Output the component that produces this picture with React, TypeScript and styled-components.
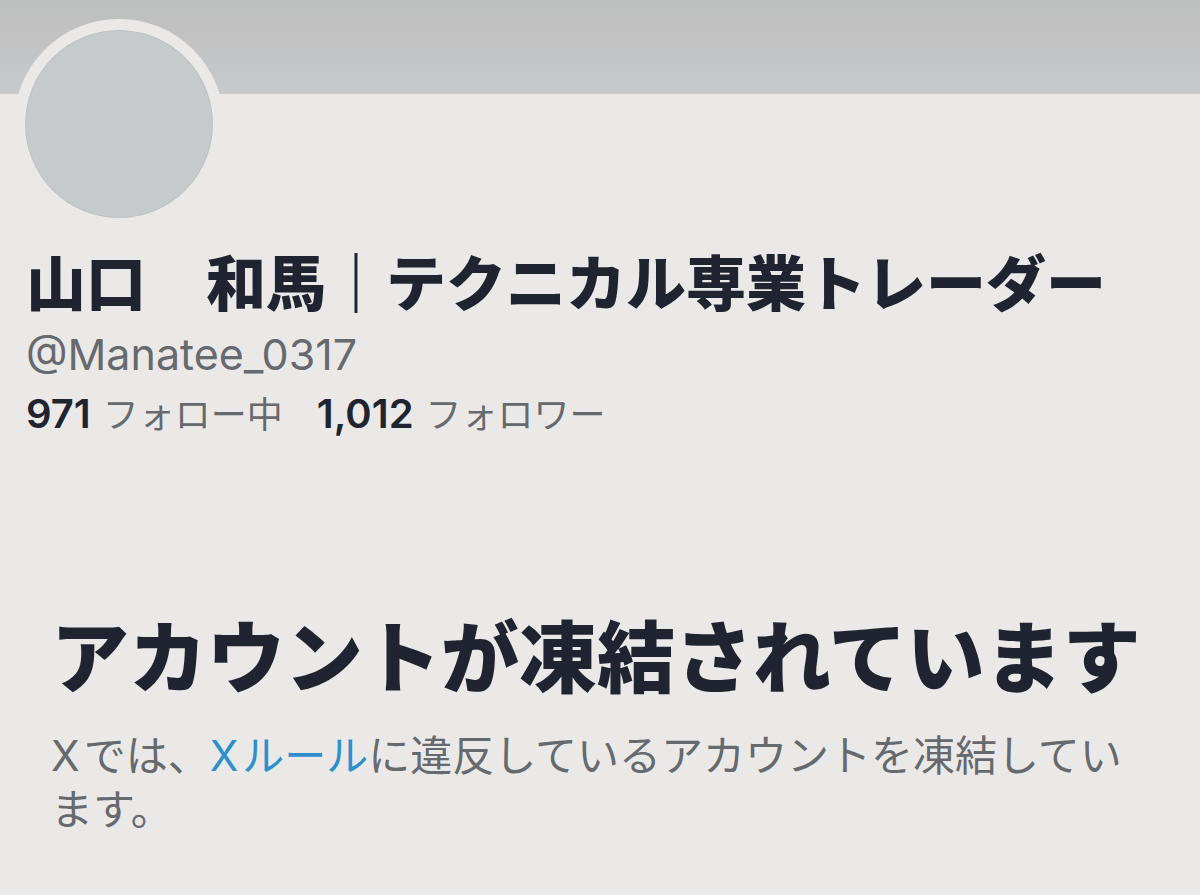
import React from "react";
import styled, { createGlobalStyle } from "styled-components";

const GlobalStyle = createGlobalStyle`
  *, *::before, *::after { box-sizing: border-box; }
  html { background: #ebe9e8; }
  body {
    margin: 0;
    background: #ebe9e8;
    color: #1f2430;
    font-family: Inter, "Noto Sans CJK JP", sans-serif;
  }
`;

const Page = styled.main`
  width: 100%;
  overflow: hidden;
`;

const Banner = styled.div`
  height: 94px;
  background: linear-gradient(#bdbfbe, #c2c2c2 40%, #c3c4c6 55%, #c7c9ca);
`;

const Profile = styled.header`
  padding: 0 26px;
`;

const Avatar = styled.div`
  position: relative;
  width: 210px;
  height: 210px;
  margin: -75px 0 0 -12px;
  border: 11px solid #ebe9e8;
  border-radius: 50%;
  background: #c6cacb;
  box-shadow: inset 0 0 0 1px #bcc0c1;
`;

const Name = styled.h1`
  margin: 17px 0 0;
  font-size: 60px;
  line-height: 76px;
  font-weight: 900;
  white-space: nowrap;
`;

const Handle = styled.p`
  margin: 2px 0 0;
  color: #66696d;
  font-size: 43px;
  line-height: 60px;
`;

const Stats = styled.div`
  display: flex;
  gap: 34px;
  font-size: 36px;
  line-height: 60px;
`;

const Stat = styled.a`
  display: flex;
  align-items: baseline;
  gap: 12px;
  color: #66696d;
  text-decoration: none;
  white-space: nowrap;
`;

const Count = styled.strong`
  color: #1f2430;
  font-size: 40px;
  font-weight: 600;
`;

const Notice = styled.section`
  padding: 164px 51px 56px;
`;

const Title = styled.h2`
  margin: 0;
  font-size: 78px;
  line-height: 100px;
  font-weight: 900;
  white-space: nowrap;
`;

const Message = styled.p`
  margin: 20px 0 0;
  color: #66696d;
  font-size: 42px;
  line-height: 54px;
`;

const Brand = styled.span`
  margin-right: 4px;
`;

const RulesLink = styled.a`
  color: #2e8fcd;
  text-decoration: none;
`;

export default function App() {
  return (
    <Page lang="ja">
      <GlobalStyle />
      <Banner />
      <Profile>
        <Avatar />
        <Name>山口　和馬｜テクニカル専業トレーダー</Name>
        <Handle>@Manatee_0317</Handle>
        <Stats>
          <Stat href="#following"><Count>971</Count> フォロー中</Stat>
          <Stat href="#followers"><Count>1,012</Count> フォロワー</Stat>
        </Stats>
      </Profile>
      <Notice>
        <Title>アカウントが凍結されています</Title>
        <Message>
          <Brand>X</Brand>では、<RulesLink href="#rules"><Brand>X</Brand>ルール</RulesLink>に違反しているアカウントを凍結しています。
        </Message>
      </Notice>
    </Page>
  );
}
